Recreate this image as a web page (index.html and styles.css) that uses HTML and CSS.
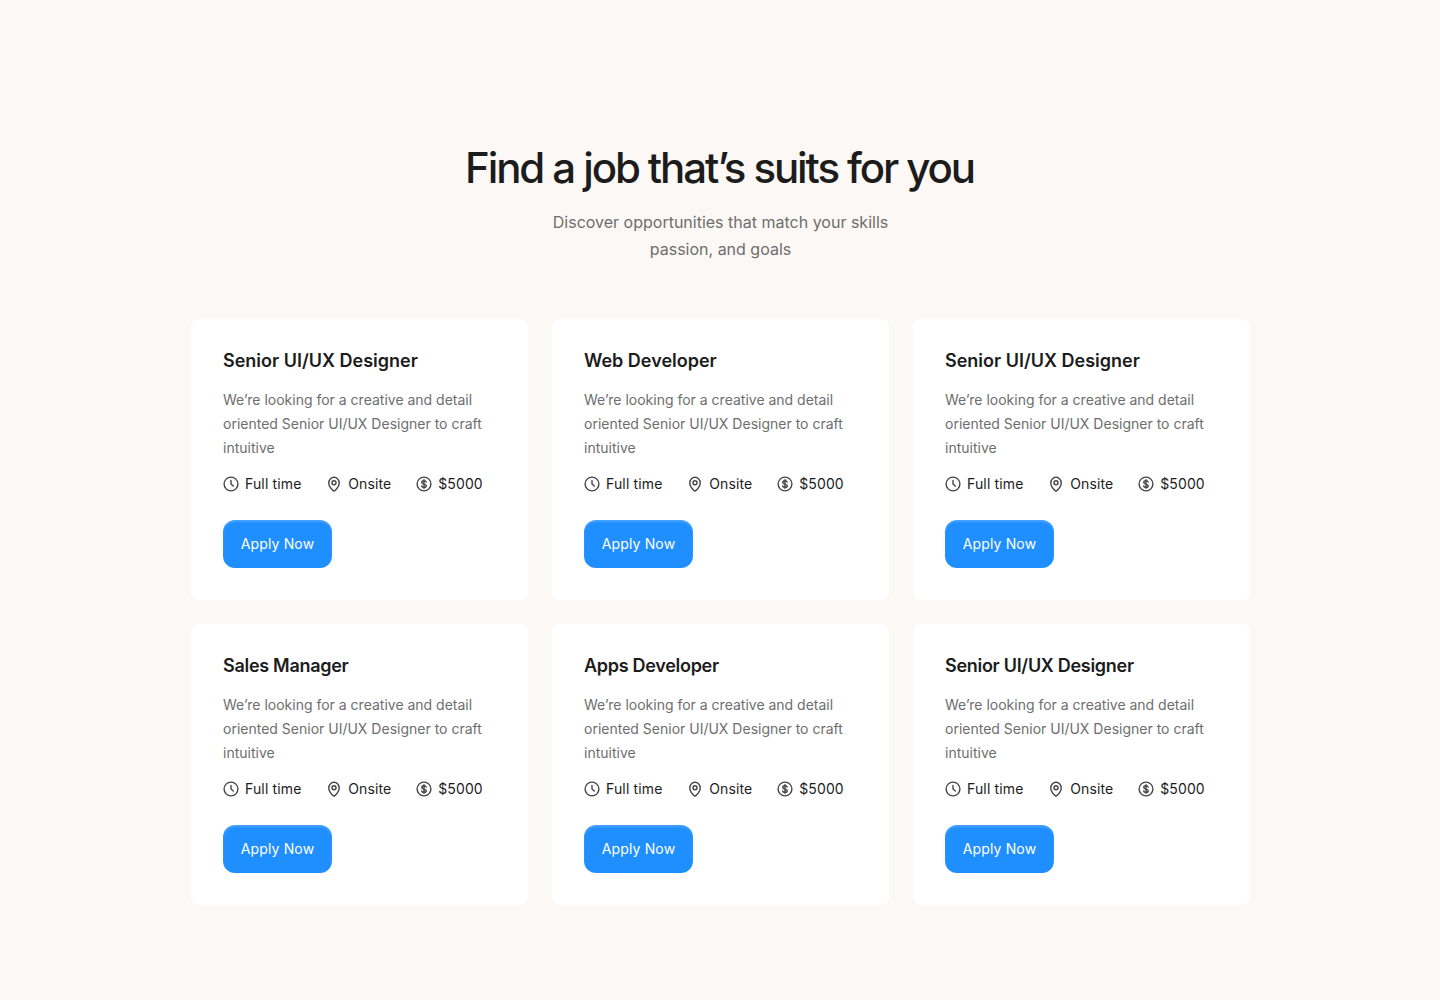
FILE: index.html
```html
<!DOCTYPE html>
<html lang="en">
<head>
  <meta charset="UTF-8" />
  <meta name="viewport" content="width=device-width, initial-scale=1.0" />
  <title>Find a job</title>
  <link rel="stylesheet" href="styles.css">
</head>
<body>
  <svg class="icon-defs" aria-hidden="true">
    <symbol id="i-clock" viewBox="0 0 16 16">
      <circle cx="8" cy="8" r="6.9" />
      <path d="M8 4.4V8l2.3 2" />
    </symbol>
    <symbol id="i-pin" viewBox="0 0 16 16">
      <path d="M8 15c-.5 0-.9-.3-1.300-.7C5 12.600 2.800 10.100 2.800 6.900 2.800 3.700 5.100 1.300 8 1.300s5.200 2.400 5.200 5.600c0 3.200-2.200 5.700-3.900 7.400-.4.400-.8.700-1.300.7Z" />
      <circle cx="8" cy="6.800" r="2" />
    </symbol>
    <symbol id="i-dollar" viewBox="0 0 16 16">
      <circle cx="8" cy="8" r="6.900" />
      <path d="M10.200 6.100C9.900 5.200 9.100 4.700 8 4.700c-1.300 0-2.200.7-2.200 1.700 0 2.300 4.500 1.100 4.500 3.300 0 1-.9 1.700-2.300 1.700-1.200 0-2.100-.5-2.300-1.400M8 3.700v8.600" class="thin" />
    </symbol>
  </svg>

  <main class="page">
    <header class="hero">
      <h1>Find a job that’s suits for you</h1>
      <p>Discover opportunities that match your skills<br>passion, and goals</p>
    </header>

    <section class="job-grid">
      <article class="job-card">
        <h2>Senior UI/UX Designer</h2>
        <p class="job-desc">We’re looking for a creative and detail oriented Senior UI/UX Designer to craft intuitive</p>
        <ul class="job-meta">
          <li><svg class="icon"><use href="#i-clock" /></svg>Full time</li>
          <li><svg class="icon"><use href="#i-pin" /></svg>Onsite</li>
          <li><svg class="icon"><use href="#i-dollar" /></svg>$5000</li>
        </ul>
        <button class="apply-btn" type="button">Apply Now</button>
      </article>

      <article class="job-card">
        <h2>Web Developer</h2>
        <p class="job-desc">We’re looking for a creative and detail oriented Senior UI/UX Designer to craft intuitive</p>
        <ul class="job-meta">
          <li><svg class="icon"><use href="#i-clock" /></svg>Full time</li>
          <li><svg class="icon"><use href="#i-pin" /></svg>Onsite</li>
          <li><svg class="icon"><use href="#i-dollar" /></svg>$5000</li>
        </ul>
        <button class="apply-btn" type="button">Apply Now</button>
      </article>

      <article class="job-card">
        <h2>Senior UI/UX Designer</h2>
        <p class="job-desc">We’re looking for a creative and detail oriented Senior UI/UX Designer to craft intuitive</p>
        <ul class="job-meta">
          <li><svg class="icon"><use href="#i-clock" /></svg>Full time</li>
          <li><svg class="icon"><use href="#i-pin" /></svg>Onsite</li>
          <li><svg class="icon"><use href="#i-dollar" /></svg>$5000</li>
        </ul>
        <button class="apply-btn" type="button">Apply Now</button>
      </article>

      <article class="job-card tight">
        <h2>Sales Manager</h2>
        <p class="job-desc">We’re looking for a creative and detail oriented Senior UI/UX Designer to craft intuitive</p>
        <ul class="job-meta">
          <li><svg class="icon"><use href="#i-clock" /></svg>Full time</li>
          <li><svg class="icon"><use href="#i-pin" /></svg>Onsite</li>
          <li><svg class="icon"><use href="#i-dollar" /></svg>$5000</li>
        </ul>
        <button class="apply-btn" type="button">Apply Now</button>
      </article>

      <article class="job-card tight">
        <h2>Apps Developer</h2>
        <p class="job-desc">We’re looking for a creative and detail oriented Senior UI/UX Designer to craft intuitive</p>
        <ul class="job-meta">
          <li><svg class="icon"><use href="#i-clock" /></svg>Full time</li>
          <li><svg class="icon"><use href="#i-pin" /></svg>Onsite</li>
          <li><svg class="icon"><use href="#i-dollar" /></svg>$5000</li>
        </ul>
        <button class="apply-btn" type="button">Apply Now</button>
      </article>

      <article class="job-card tight">
        <h2>Senior UI/UX Designer</h2>
        <p class="job-desc">We’re looking for a creative and detail oriented Senior UI/UX Designer to craft intuitive</p>
        <ul class="job-meta">
          <li><svg class="icon"><use href="#i-clock" /></svg>Full time</li>
          <li><svg class="icon"><use href="#i-pin" /></svg>Onsite</li>
          <li><svg class="icon"><use href="#i-dollar" /></svg>$5000</li>
        </ul>
        <button class="apply-btn" type="button">Apply Now</button>
      </article>
    </section>
  </main>
</body>
</html>
```

FILE: styles.css
```css
body {
  margin: 0;
  background: #FBF8F5;
  color: #1C1C1C;
  font-family: Inter, 'Liberation Sans', sans-serif;
}
.icon-defs {
  display: none;
}
.page {
  width: 1059px;
  margin: 0 190px 0 191px;
  padding: 140px 0 95px;
}

/* Cabecera */
.hero {
  text-align: center;
  margin-bottom: 56px;
}
.hero h1 {
  margin: 0 0 13px;
  padding-right: 2px;
  font-size: 42px;
  line-height: 56px;
  font-weight: 500;
  letter-spacing: -0.05em;
}
.hero p {
  margin: 0;
  font-size: 16px;
  line-height: 27px;
  color: #6E6E6E;
}

/* Tarjetas */
.job-grid {
  display: grid;
  grid-template-columns: repeat(3, 337px);
  gap: 24px;
}
.job-card {
  background: #FFFFFF;
  border-radius: 8px;
  padding: 32px;
  height: 281px;
  box-sizing: border-box;
}
.job-card h2 {
  margin: 0 0 17px;
  font-size: 18px;
  line-height: 20px;
  font-weight: 600;
  color: #1C1C1C;
}
.job-card.tight h2 {
  letter-spacing: -0.016em;
}
.job-desc {
  margin: 0 0 12px;
  font-size: 14px;
  line-height: 24px;
  color: #6E6E6E;
}
.job-meta {
  display: flex;
  gap: 24.75px;
  margin: 0 0 24px;
  padding: 0;
  list-style: none;
  font-size: 14px;
  line-height: 24px;
  letter-spacing: 0.01em;
  color: #1C1C1C;
}
.job-meta li {
  display: flex;
  align-items: center;
  gap: 6px;
}
.icon {
  width: 16px;
  height: 16px;
  fill: none;
  stroke: #444444;
  stroke-width: 1.4;
  stroke-linecap: round;
  stroke-linejoin: round;
}
.icon .thin {
  stroke-width: 1.1;
}
.apply-btn {
  display: block;
  width: 109px;
  height: 48px;
  padding: 0 0 2px;
  border: none;
  border-radius: 12px;
  background: #1F8FFF;
  box-shadow: inset 0 2px 2px rgba(255,255,255,0.18);
  color: #FFFFFF;
  font-family: inherit;
  font-size: 14px;
  font-weight: 400;
  letter-spacing: 0.01em;
  cursor: pointer;
}
```
